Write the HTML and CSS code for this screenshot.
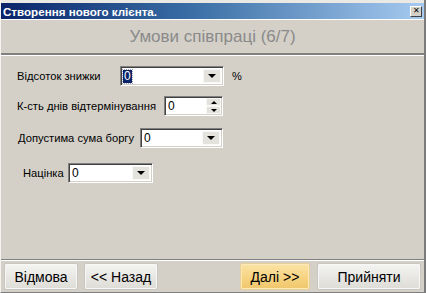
FILE: index.html
```html
<!DOCTYPE html>
<html lang="uk">
<head>
    <meta charset="UTF-8">
    <title>Створення нового клієнта.</title>
    <link rel="stylesheet" href="styles.css">
</head>
<body>
    <div class="window">
        <div class="top-strip"></div>

        <!-- Title bar -->
        <div class="titlebar">
            <span class="title">Створення нового клієнта.</span>
            <span class="close-btn">&#x2715;</span>
        </div>

        <!-- Step header -->
        <div class="step-header">Умови співпраці (6/7)</div>

        <!-- Form -->
        <div class="form">
            <div class="row row-discount">
                <span class="label">Відсоток знижки</span>
                <div class="combo combo-discount">
                    <span class="value"><span class="selected">0</span></span>
                    <span class="drop-btn"><span class="arrow-down"></span></span>
                </div>
                <span class="unit">%</span>
            </div>
            <div class="row row-days">
                <span class="label">К-сть днів відтермінування</span>
                <div class="combo combo-days">
                    <span class="value">0</span>
                    <span class="spin">
                        <span class="spin-btn"><span class="arrow-up small"></span></span>
                        <span class="spin-btn"><span class="arrow-down small"></span></span>
                    </span>
                </div>
            </div>
            <div class="row row-debt">
                <span class="label">Допустима сума боргу</span>
                <div class="combo combo-debt">
                    <span class="value">0</span>
                    <span class="drop-btn"><span class="arrow-down"></span></span>
                </div>
            </div>
            <div class="row row-markup">
                <span class="label">Націнка</span>
                <div class="combo combo-markup">
                    <span class="value">0</span>
                    <span class="drop-btn"><span class="arrow-down"></span></span>
                </div>
            </div>
        </div>

        <!-- Buttons -->
        <div class="footer">
            <button class="btn btn-cancel">Відмова</button>
            <button class="btn btn-back">&lt;&lt; Назад</button>
            <span class="spacer"></span>
            <button class="btn btn-next">Далі &gt;&gt;</button>
            <button class="btn btn-accept">Прийняти</button>
        </div>
    </div>
</body>
</html>
```

FILE: styles.css
```css
body {
    margin: 0;
    width: 426px;
    height: 293px;
    overflow: hidden;
    font-family: "Liberation Sans", Arial, sans-serif;
    background-color: #d4d0c8;
}
.window {
    display: flex;
    flex-direction: column;
    height: 293px;
    box-sizing: border-box;
    background-color: #d4d0c8;
    border-left: 1px solid #f4f3ef;
    border-right: 2px solid #7b7b7b;
    border-bottom: 1px solid #808080;
}
.top-strip {
    height: 3px;
    background-color: #ebe9e4;
}
.titlebar {
    height: 16px;
    display: flex;
    align-items: center;
    justify-content: space-between;
    padding: 0 2px 0 2px;
    background: linear-gradient(to right, #0a246a, #3a6ea5 45%, #a6caf0);
}
.title {
    color: #fff;
    font-weight: bold;
    font-size: 11.6px;
}
.close-btn {
    width: 10px;
    height: 9px;
    display: flex;
    align-items: center;
    justify-content: center;
    font-size: 8px;
    line-height: 1;
    color: #000;
    background-color: #d4d0c8;
    border-top: 1px solid #fff;
    border-left: 1px solid #fff;
    border-right: 1px solid #404040;
    border-bottom: 1px solid #404040;
}
.step-header {
    height: 33px;
    display: flex;
    align-items: center;
    justify-content: center;
    border-top: 1px solid #fff;
    border-bottom: 2px solid #808080;
    color: #8a8a8a;
    font-size: 17px;
}
.form {
    flex: 1;
    padding: 10px 0 0 0;
    border-top: 1px solid #fff;
    border-bottom: 1px solid #808080;
    font-size: 11px;
    color: #000;
}
.row {
    display: flex;
    align-items: center;
    height: 20px;
}
.label {
    flex: none;
    white-space: nowrap;
    font-size: 11.2px;
}
.row-discount {
    padding-left: 16px;
}
.row-discount .label {
    width: 103px;
}
.row-days {
    margin-top: 10px;
    padding-left: 16px;
}
.row-days .label {
    width: 147px;
}
.row-debt {
    margin-top: 12px;
    padding-left: 17px;
}
.row-debt .label {
    width: 122px;
}
.row-markup {
    margin-top: 15px;
    padding-left: 22px;
}
.row-markup .label {
    width: 45px;
}
.combo {
    flex: none;
    display: flex;
    align-items: stretch;
    height: 20px;
    box-sizing: border-box;
    background-color: #fff;
    border-top: 1px solid #808080;
    border-left: 1px solid #808080;
    border-right: 1px solid #fff;
    border-bottom: 1px solid #fff;
    box-shadow: inset 1px 1px 0 #404040, inset -1px -1px 0 #d4d0c8;
}
.combo-discount {
    width: 104px;
}
.combo-days {
    width: 59px;
}
.combo-debt {
    width: 83px;
}
.combo-markup {
    width: 85px;
}
.value {
    flex: 1;
    display: flex;
    align-items: center;
    padding-left: 3px;
    font-size: 12px;
}
.selected {
    margin-left: -1px;
    padding: 0 1px;
    line-height: 13px;
    background-color: #0a246a;
    color: #fff;
    outline: 1px dotted #9aa4c8;
}
.unit {
    margin-left: 8px;
    font-size: 11px;
}
.drop-btn {
    width: 16px;
    margin: 2px 2px 2px 0;
    display: flex;
    align-items: center;
    justify-content: center;
    background-color: #e4e2dc;
    border: 1px solid #f8f8f6;
}
.arrow-down {
    width: 0;
    height: 0;
    border-left: 4px solid transparent;
    border-right: 4px solid transparent;
    border-top: 4px solid #000;
}
.arrow-up {
    width: 0;
    height: 0;
    border-left: 4px solid transparent;
    border-right: 4px solid transparent;
    border-bottom: 4px solid #000;
}
.arrow-down.small {
    border-left-width: 3px;
    border-right-width: 3px;
    border-top-width: 3px;
}
.arrow-up.small {
    border-left-width: 3px;
    border-right-width: 3px;
    border-bottom-width: 3px;
}
.spin {
    width: 15px;
    margin: 1px 1px 1px 0;
    display: flex;
    flex-direction: column;
}
.spin-btn {
    flex: 1;
    display: flex;
    align-items: center;
    justify-content: center;
    background-color: #e4e2dc;
    border: 1px solid #f8f8f6;
}
.footer {
    height: 31px;
    display: flex;
    align-items: center;
    gap: 6px;
    padding: 0 3px 0 3px;
    border-top: 1px solid #fff;
}
.spacer {
    flex: 1;
}
.btn {
    height: 27px;
    padding: 0;
    font-family: "Liberation Sans", Arial, sans-serif;
    font-size: 14px;
    color: #000;
    border: 1px solid #c8c6c0;
    border-radius: 2px;
    background: linear-gradient(to bottom, #f4f4f2, #e6e5e1 60%, #dddcd6);
    box-shadow: inset 0 0 0 1px #f7f7f5;
}
.btn-cancel {
    width: 74px;
}
.btn-back {
    width: 74px;
}
.btn-next {
    width: 70px;
    margin-right: 1px;
    background: linear-gradient(to bottom, #fbe3a6, #f6d27e 60%, #efc66c);
    border-color: #e7cf98;
    box-shadow: inset 0 0 0 1px #fde9b8;
}
.btn-accept {
    width: 104px;
}
```
